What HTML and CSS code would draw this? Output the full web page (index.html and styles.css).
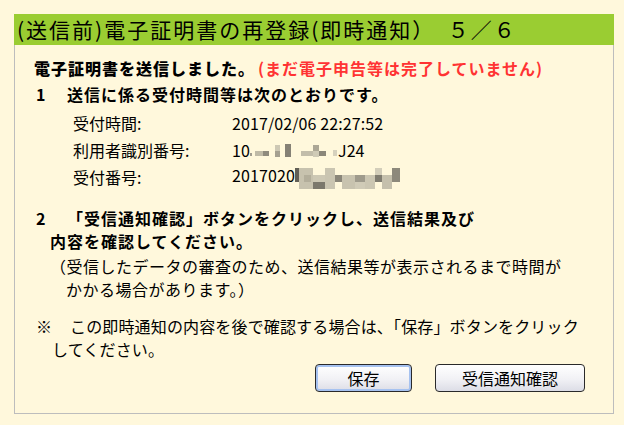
FILE: index.html
```html
<!DOCTYPE html>
<html lang="ja">
<head>
<meta charset="utf-8">
<title>電子証明書の再登録</title>
<link rel="stylesheet" href="styles.css">
</head>
<body>
<div class="panel">
  <div class="header">(送信前)電子証明書の再登録(即時通知）　５／６</div>
  <div class="content">
    <p class="lead"><b>電子証明書を送信しました。</b><span class="red">(まだ電子申告等は完了していません)</span></p>

    <p class="head"><span class="num">1</span>送信に係る受付時間等は次のとおりです。</p>
    <div class="rows">
      <div class="label">受付時間:</div>
      <div class="value">2017/02/06 22:27:52</div>
      <div class="label">利用者識別番号:</div>
      <div class="value">10<svg class="mosaic m1" width="88" height="14" viewBox="0 0 88 14"><rect x="0" y="9" width="2" height="3" fill="#a19d8f"/><rect x="5" y="7" width="8" height="5" fill="#bfbaa6"/><rect x="13" y="7" width="6" height="5" fill="#8f8b7d"/><rect x="25" y="1" width="5" height="6" fill="#cdc8b4"/><rect x="25" y="7" width="5" height="6" fill="#a5a090"/><rect x="35" y="0" width="6" height="13" fill="#858175"/><rect x="51" y="7" width="12" height="5" fill="#c2bdaa"/><rect x="63" y="1" width="6" height="6" fill="#aca795"/><rect x="63" y="7" width="6" height="6" fill="#cfcab6"/><rect x="69" y="7" width="7" height="5" fill="#8b8779"/><rect x="83" y="6" width="4" height="6" fill="#d6d1bd"/></svg>J24</div>
      <div class="label">受付番号:</div>
      <div class="value">2017020<svg class="mosaic m2" width="106" height="22" viewBox="0 0 106 22"><rect x="0" y="0" width="4" height="14" fill="#615e55"/><rect x="4" y="0" width="14" height="21" fill="#c7c2ae"/><rect x="9" y="7" width="7" height="7" fill="#b3ae9b"/><rect x="18" y="7" width="12" height="7" fill="#cdc8b4"/><rect x="18" y="14" width="12" height="7" fill="#7b786c"/><rect x="30" y="0" width="10" height="21" fill="#cac5b1"/><rect x="40" y="7" width="7" height="7" fill="#8a8679"/><rect x="47" y="7" width="13" height="14" fill="#c8c3af"/><rect x="60" y="7" width="10" height="7" fill="#9f9b8c"/><rect x="60" y="14" width="10" height="7" fill="#d0cbb7"/><rect x="70" y="7" width="10" height="14" fill="#cbc6b2"/><rect x="80" y="0" width="7" height="7" fill="#d3ceba"/><rect x="80" y="7" width="7" height="7" fill="#7f7c70"/><rect x="87" y="7" width="10" height="14" fill="#c5c0ac"/><rect x="97" y="0" width="8" height="14" fill="#8d897b"/></svg></div>
    </div>

    <div class="sec2">
      <p class="head"><span class="num">2</span>「受信通知確認」ボタンをクリックし、送信結果及び</p>
      <p class="head cont">内容を確認してください。</p>
      <p class="note">（受信したデータの審査のため、送信結果等が表示されるまで時間が<br>かかる場合があります。）</p>
    </div>

    <p class="memo"><span class="kome">※</span>この即時通知の内容を後で確認する場合は、「保存」ボタンをクリック<br>してください。</p>

    <div class="buttons">
      <button class="btn btn-save" type="button">保存</button>
      <button class="btn btn-check" type="button">受信通知確認</button>
    </div>
  </div>
</div>
</body>
</html>
```
FILE: styles.css
```css
* { box-sizing: border-box; }

html, body {
  margin: 0;
  padding: 0;
  background: #fff8dc;
}

body {
  font-family: "Noto Sans CJK JP", "Noto Sans", sans-serif;
  font-size: 16px;
  color: #000;
}

p { margin: 0; }

.panel {
  margin: 14px 0 0 14px;
  width: 600px;
  height: 400px;
  border: 1px solid #bdbdbd;
  border-top: none;
  background: #fff8dc;
}

.header {
  margin: 0 -1px;
  height: 31px;
  line-height: 31px;
  background: #9acd32;
  padding-left: 3px;
  font-size: 21px;
  letter-spacing: 2px;
  white-space: nowrap;
}

.content {
  padding: 12px 0 0 19px;
}

.lead {
  line-height: 22px;
  white-space: nowrap;
  font-weight: 700;
  letter-spacing: 1px;
}

.red {
  color: #ff3333;
  padding-left: 3px;
}

.head {
  font-weight: 700;
  letter-spacing: 1px;
  line-height: 23px;
  padding-left: 2px;
  white-space: nowrap;
  margin-top: 4px;
}

.num {
  display: inline-block;
  width: 31px;
  letter-spacing: 0;
}

.rows {
  display: grid;
  grid-template-columns: 159px auto;
  grid-auto-rows: 27px;
  align-items: center;
  padding-left: 39px;
  margin-top: 3px;
}

.value {
  letter-spacing: 0.1px;
  white-space: nowrap;
}

.mosaic {
  vertical-align: -1px;
}

.m2 {
  vertical-align: -8px;
}

.sec2 {
  margin-top: 17px;
}

.sec2 .head {
  margin-top: 0;
}

.head.cont {
  padding-left: 16px;
}

.note {
  line-height: 23px;
  padding-left: 32px;
  text-indent: -16px;
  margin-top: 2px;
  letter-spacing: 0.5px;
  white-space: nowrap;
}

.memo {
  line-height: 23px;
  padding-left: 18px;
  text-indent: -16px;
  margin-top: 14px;
  letter-spacing: 0.15px;
  white-space: nowrap;
}

.kome {
  display: inline-block;
  width: 34px;
  text-indent: 0;
}

.buttons {
  display: flex;
  justify-content: flex-end;
  gap: 23px;
  padding-right: 28px;
  margin-top: 3px;
}

.btn {
  font-family: "Noto Sans CJK JP", sans-serif;
  font-size: 16px;
  color: #000;
  height: 28px;
  padding: 0;
  border: 1px solid #2a2a2a;
  border-radius: 4px;
  background: linear-gradient(#ffffff, #f1f1f5 55%, #dcdde6);
  line-height: 24px;
}

.btn-save {
  width: 97px;
  box-shadow: inset 0 0 0 2px #a6c2f0;
}

.btn-check {
  width: 150px;
}
```
